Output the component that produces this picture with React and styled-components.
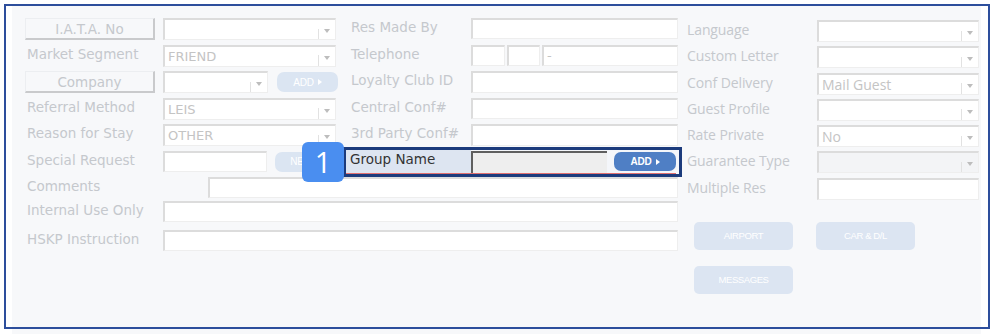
import React from 'react';
import styled, { createGlobalStyle } from 'styled-components';

const Global = createGlobalStyle`
  html, body { margin: 0; padding: 0; background: #ffffff; }
  body {
    width: 996px; height: 334px; overflow: hidden;
    font-family: "DejaVu Sans", Verdana, sans-serif;
  }
  * { box-sizing: border-box; }
`;

const Stage = styled.div`
  position: relative;
  width: 996px;
  height: 334px;
  padding: 6px 0 0 12px;
`;

const Frame = styled.div`
  position: absolute;
  left: 4px;
  top: 4px;
  width: 986px;
  height: 325px;
  border: 2px solid #2d4e9c;
  pointer-events: none;
  z-index: 5;
`;

const Panel = styled.div`
  width: 969px;
  height: 328px;
  background: #f7f8fa;
  padding: 12px 0 0 13px;
  display: flex;
  gap: 9px;
`;

const LeftBlock = styled.div`
  width: 653px;
  display: flex;
  flex-direction: column;
`;

const TopGrid = styled.div`
  display: grid;
  grid-template-columns: 311px 329px;
  grid-auto-rows: 22px;
  column-gap: 13px;
  row-gap: 4.5px;
`;

const Row = styled.div`
  display: flex;
  align-items: flex-start;
  height: ${p => p.$h || 22}px;
  margin-top: ${p => p.$mt || 0}px;
  grid-column: ${p => p.$col || 'auto'};
  grid-row: ${p => p.$row || 'auto'};
`;

const Label = styled.div`
  flex: none;
  width: ${p => p.$w}px;
  padding-left: 2px;
  font-size: 13.5px;
  line-height: 18px;
  color: #c5c8cd;
  white-space: nowrap;
`;

const RightLabel = styled(Label)`
  font-family: "Open Sans", "Noto Sans", sans-serif;
  font-size: 14px;
  padding-left: 0;
  line-height: 20px;
  letter-spacing: -0.1px;
`;

const LabelCell = styled.div`
  flex: none;
  width: ${p => p.$w}px;
`;

const LabelButton = styled.div`
  width: 130px;
  height: 22px;
  border-top: 1px solid #eceef1;
  border-left: 1px solid #eceef1;
  border-right: 2px solid #c9cacc;
  border-bottom: 2px solid #c9cacc;
  display: flex;
  align-items: center;
  justify-content: center;
  font-size: 13.5px;
  color: #c5c8cd;
  background: #f7f8fa;
`;

const Field = styled.div`
  position: relative;
  flex: ${p => (p.$w ? 'none' : '1')};
  width: ${p => (p.$w ? `${p.$w}px` : 'auto')};
  height: ${p => p.$h || 22}px;
  background: ${p => (p.$disabled ? '#f3f4f6' : '#ffffff')};
  border-top: 2px solid #dcdcdc;
  border-left: 2px solid #dcdcdc;
  border-right: 1px solid #eeeeee;
  border-bottom: 1px solid #eeeeee;
  display: flex;
  align-items: flex-end;
  padding-left: 3px;
  color: #c4c4c4;
  font-family: ${p => (p.$sans ? '"Open Sans", "Noto Sans", sans-serif' : '"DejaVu Sans", Verdana, sans-serif')};
  font-size: ${p => (p.$sans ? '14px' : '13px')};
  line-height: 17px;
  white-space: nowrap;
  overflow: hidden;
`;

const Value = styled.span`
  flex: 1;
  padding-bottom: 1px;
`;

const Arrow = styled.span`
  position: relative;
  flex: none;
  width: 17px;
  height: 100%;
  &::before {
    content: '';
    position: absolute;
    left: 0;
    top: 45%;
    bottom: 0;
    border-left: 1px solid #e2e2e2;
  }
  &::after {
    content: '';
    position: absolute;
    left: 6px;
    top: 9px;
    border-left: 3.5px solid transparent;
    border-right: 3.5px solid transparent;
    border-top: 4px solid #bdbdbd;
  }
`;

const SmallButton = styled.div`
  flex: none;
  width: ${p => p.$w || 61}px;
  height: ${p => p.$h || 20}px;
  margin-left: ${p => p.$ml || 0}px;
  margin-top: ${p => p.$mt || 0}px;
  border-radius: 7px;
  background: ${p => (p.$active ? '#4f7fc5' : '#dbe5f2')};
  color: #ffffff;
  display: flex;
  align-items: center;
  justify-content: center;
  gap: 4px;
  font-family: "Liberation Sans", Arial, sans-serif;
  font-size: 10px;
  font-weight: ${p => (p.$active ? 700 : 400)};
  letter-spacing: -0.2px;
`;

const Tri = styled.span`
  display: inline-block;
  border-top: 3.5px solid transparent;
  border-bottom: 3.5px solid transparent;
  border-left: 4px solid #ffffff;
`;

const GroupCell = styled.div`
  grid-column: 2;
  grid-row: 6;
  position: relative;
  z-index: 3;
`;

const GroupBox = styled.div`
  position: relative;
  margin: -3.5px -4px 0 -6px;
  height: 30px;
  border: 3px solid #1c3b7c;
  background: #f4f6fa;
`;

const GroupInner = styled.div`
  display: flex;
  align-items: flex-start;
  height: 24px;
  margin-right: 3px;
  border-bottom: 1.5px solid #e07070;
`;

const GroupLabel = styled.div`
  flex: none;
  width: 125px;
  height: 100%;
  background: #dde5f1;
  padding-left: 4px;
  font-size: 13.5px;
  line-height: 18px;
  color: #333333;
`;

const GroupInput = styled.div`
  flex: none;
  width: 136px;
  height: 22px;
  margin-top: 1px;
  background: #eeeeee;
  border-top: 2px solid #5f5f5f;
  border-left: 2px solid #5f5f5f;
`;

const Badge = styled.div`
  position: absolute;
  left: -44px;
  top: -8px;
  width: 42px;
  height: 40px;
  border-radius: 6px;
  background: #4a8ef0;
  color: #ffffff;
  font-family: "Open Sans", "Noto Sans", sans-serif;
  font-size: 29px;
  line-height: 40px;
  text-align: center;
  z-index: 2;
`;

const Phone = styled.div`
  flex: 1;
  display: flex;
  gap: 2px;
`;

const RightBlock = styled.div`
  width: 292px;
  padding-top: 2px;
  display: flex;
  flex-direction: column;
`;

const RightGrid = styled.div`
  display: grid;
  grid-auto-rows: 22px;
  row-gap: 4.3px;
`;

const ActionGrid = styled.div`
  display: grid;
  grid-template-columns: 99px 99px;
  grid-auto-rows: 28px;
  column-gap: 23px;
  row-gap: 16px;
  margin: 22px 0 0 7px;
`;

const ActionButton = styled.div`
  border-radius: 5px;
  background: #dce5f2;
  color: #ffffff;
  display: flex;
  align-items: center;
  justify-content: center;
  font-family: "Liberation Sans", Arial, sans-serif;
  font-size: 9.5px;
  letter-spacing: -0.4px;
`;

const Select = ({ w, value, sans, disabled }) => (
  <Field $w={w} $sans={sans} $disabled={disabled}>
    <Value>{value}</Value>
    <Arrow />
  </Field>
);

const AddBtn = ({ label = 'ADD', ...rest }) => (
  <SmallButton {...rest}>
    {label} <Tri />
  </SmallButton>
);

export default function App() {
  return (
    <>
      <Global />
      <Stage>
        <Panel>
          <LeftBlock>
            <TopGrid>
              <Row $col={1} $row={1}>
                <LabelCell $w={138}><LabelButton>I.A.T.A. No</LabelButton></LabelCell>
                <Select />
              </Row>
              <Row $col={1} $row={2}>
                <Label $w={138}>Market Segment</Label>
                <Select value="FRIEND" />
              </Row>
              <Row $col={1} $row={3}>
                <LabelCell $w={138}><LabelButton>Company</LabelButton></LabelCell>
                <Select w={105} />
                <AddBtn $ml={9} $mt={1} />
              </Row>
              <Row $col={1} $row={4}>
                <Label $w={138}>Referral Method</Label>
                <Select value="LEIS" />
              </Row>
              <Row $col={1} $row={5}>
                <Label $w={138}>Reason for Stay</Label>
                <Select value="OTHER" />
              </Row>
              <Row $col={1} $row={6}>
                <Label $w={138}>Special Request</Label>
                <Field $w={104} $h={21} />
                <AddBtn label="NEW" $ml={8} $mt={1} />
              </Row>

              <Row $col={2} $row={1}>
                <Label $w={122}>Res Made By</Label>
                <Field $h={21} />
              </Row>
              <Row $col={2} $row={2}>
                <Label $w={122}>Telephone</Label>
                <Phone>
                  <Field $w={34} $h={21} />
                  <Field $w={33} $h={21} />
                  <Field $h={21}><Value>-</Value></Field>
                </Phone>
              </Row>
              <Row $col={2} $row={3}>
                <Label $w={122}>Loyalty Club ID</Label>
                <Field />
              </Row>
              <Row $col={2} $row={4}>
                <Label $w={122}>Central Conf#</Label>
                <Field $h={21} />
              </Row>
              <Row $col={2} $row={5}>
                <Label $w={122}>3rd Party Conf#</Label>
                <Field />
              </Row>
              <GroupCell>
                <GroupBox>
                  <Badge>1</Badge>
                  <GroupInner>
                    <GroupLabel>Group Name</GroupLabel>
                    <GroupInput />
                    <AddBtn $active $w={62} $h={19} $ml={7} $mt={2} />
                  </GroupInner>
                </GroupBox>
              </GroupCell>
            </TopGrid>
            <Row $h={21} $mt={4.5}>
              <Label $w={183}>Comments</Label>
              <Field $h={21} />
            </Row>
            <Row $h={21} $mt={3}>
              <Label $w={138}>Internal Use Only</Label>
              <Field $h={21} />
            </Row>
            <Row $h={21} $mt={8}>
              <Label $w={138}>HSKP Instruction</Label>
              <Field $h={21} />
            </Row>
          </LeftBlock>
          <RightBlock>
            <RightGrid>
              <Row>
                <RightLabel $w={130}>Language</RightLabel>
                <Select sans />
              </Row>
              <Row>
                <RightLabel $w={130}>Custom Letter</RightLabel>
                <Select sans />
              </Row>
              <Row>
                <RightLabel $w={130}>Conf Delivery</RightLabel>
                <Select sans value="Mail Guest" />
              </Row>
              <Row>
                <RightLabel $w={130}>Guest Profile</RightLabel>
                <Select sans />
              </Row>
              <Row>
                <RightLabel $w={130}>Rate Private</RightLabel>
                <Select sans value="No" />
              </Row>
              <Row>
                <RightLabel $w={130}>Guarantee Type</RightLabel>
                <Select sans disabled />
              </Row>
              <Row>
                <RightLabel $w={130}>Multiple Res</RightLabel>
                <Field />
              </Row>
            </RightGrid>
            <ActionGrid>
              <ActionButton>AIRPORT</ActionButton>
              <ActionButton>CAR &amp; D/L</ActionButton>
              <ActionButton>MESSAGES</ActionButton>
            </ActionGrid>
          </RightBlock>
        </Panel>
        <Frame />
      </Stage>
    </>
  );
}
